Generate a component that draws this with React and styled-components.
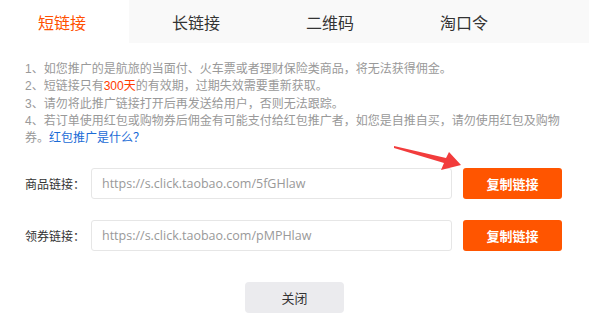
import React from 'react'
import styled, { createGlobalStyle } from 'styled-components'

const Global = createGlobalStyle`
    body {
        margin: 0;
        background: #fff;
        font-family: 'Liberation Sans', 'Noto Sans CJK SC', sans-serif;
    }
`

const Page = styled.div`
    position: relative;
    width: 589px;
    height: 327px;
    background: #fff;
`

const Tabs = styled.div`
    display: flex;
    height: 43px;
    background: #f9f9f9;
`

const Tab = styled.div`
    width: 129px;
    margin-right: 5px;
    padding-right: 5px;
    box-sizing: border-box;
    display: flex;
    align-items: center;
    justify-content: center;
    font-size: 16px;
    color: ${props => props.active ? '#ff5000' : '#333'};
    background: ${props => props.active ? '#fff' : 'transparent'};
`

const Notes = styled.div`
    margin: 18px 0 0 25px;
    width: 545px;
    font-size: 12px;
    line-height: 17.3px;
    color: #999;
`

const Red = styled.span`
    color: #ff3c00;
`

const Link = styled.a`
    color: #1a6bd6;
    text-decoration: none;
`

const Form = styled.div`
    margin-top: 21px;
    display: flex;
    flex-direction: column;
    gap: 21px;
`

const Row = styled.div`
    display: flex;
    align-items: center;
    padding-left: 25px;
`

const Label = styled.span`
    width: 66px;
    font-size: 12px;
    color: #333;
    white-space: nowrap;
`

const Input = styled.div`
    width: 361px;
    height: 31px;
    box-sizing: border-box;
    border: 1px solid #e6e6e6;
    border-radius: 3px;
    padding-left: 10px;
    display: flex;
    align-items: center;
    font-family: 'Open Sans', 'Liberation Sans', sans-serif;
    font-size: 12.5px;
    color: #999;
`

const CopyButton = styled.button`
    margin-left: 11px;
    width: 99px;
    height: 31px;
    border: none;
    border-radius: 3px;
    background: #ff5500;
    color: #fff;
    font-family: 'Liberation Sans', 'Noto Sans CJK SC', sans-serif;
    font-size: 13px;
    font-weight: 600;
`

const Footer = styled.div`
    display: flex;
    justify-content: center;
    margin-top: 31px;
`

const CloseButton = styled.button`
    width: 99px;
    height: 31px;
    border: none;
    border-radius: 4px;
    background: #ebebee;
    color: #333;
    font-family: 'Liberation Sans', 'Noto Sans CJK SC', sans-serif;
    font-size: 13px;
`

const Arrow = styled.svg`
    position: absolute;
    left: 390px;
    top: 140px;
`

const links = [
    { label: '商品链接：', url: 'https://s.click.taobao.com/5fGHlaw' },
    { label: '领券链接：', url: 'https://s.click.taobao.com/pMPHlaw' },
]

export default function App() {
    return (
        <Page>
            <Global />
            <Tabs>
                <Tab active>短链接</Tab>
                <Tab>长链接</Tab>
                <Tab>二维码</Tab>
                <Tab>淘口令</Tab>
            </Tabs>
            <Notes>
                <div>1、如您推广的是航旅的当面付、火车票或者理财保险类商品，将无法获得佣金。</div>
                <div>2、短链接只有<Red>300天</Red>的有效期，过期失效需要重新获取。</div>
                <div>3、请勿将此推广链接打开后再发送给用户，否则无法跟踪。</div>
                <div>4、若订单使用红包或购物券后佣金有可能支付给红包推广者，如您是自推自买，请勿使用红包及购物券。<Link href="#">红包推广是什么？</Link></div>
            </Notes>
            <Form>
                {links.map(l => (
                    <Row key={l.label}>
                        <Label>{l.label}</Label>
                        <Input>{l.url}</Input>
                        <CopyButton>复制链接</CopyButton>
                    </Row>
                ))}
            </Form>
            <Footer>
                <CloseButton>关闭</CloseButton>
            </Footer>
            <Arrow width="75" height="34" viewBox="0 0 75 34">
                <polygon points="4,6 56,18 59,12 71,25 51,30 54,23 4,8" fill="#f23c3c" />
            </Arrow>
        </Page>
    )
}
